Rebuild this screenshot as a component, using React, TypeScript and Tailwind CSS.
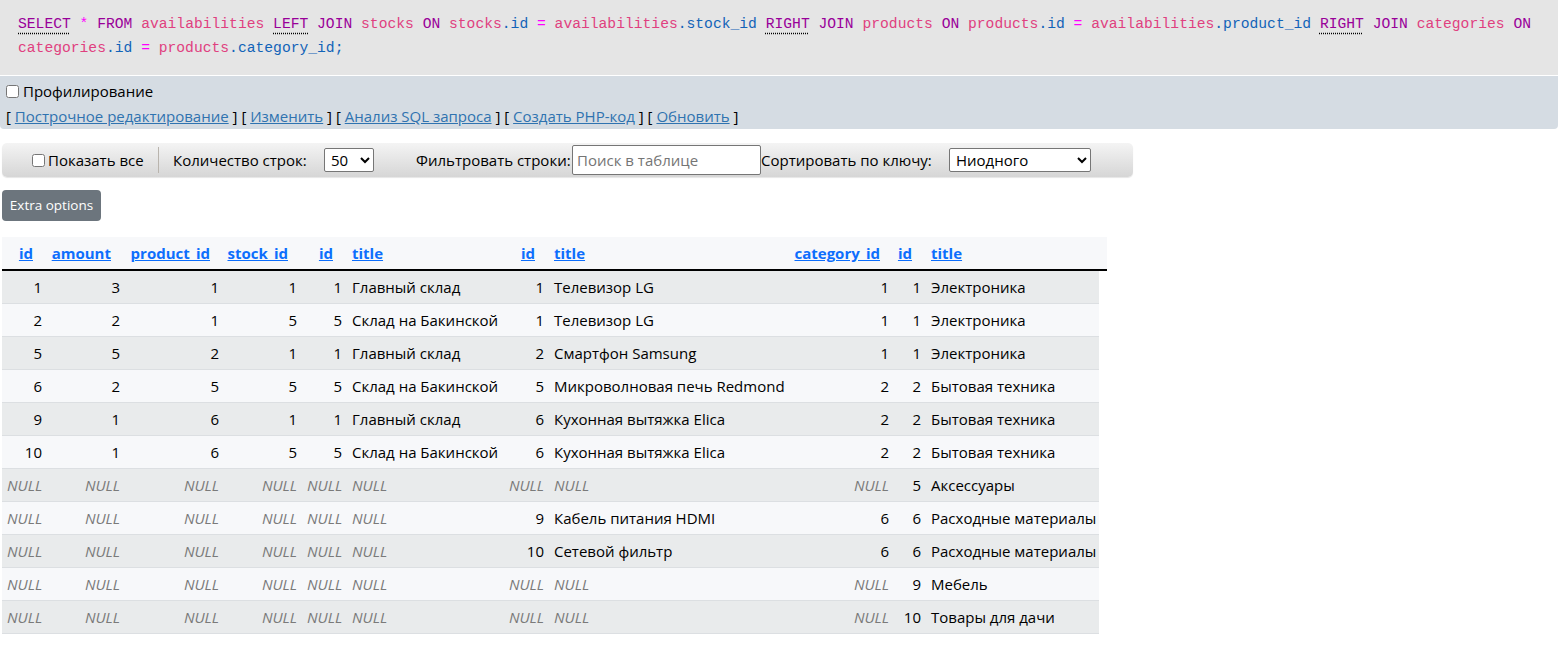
import React from 'react';

const KW = 'text-[#990099]';
const TB = 'text-[#e0407f]';
const CL = 'text-[#1263b8]';
const OP = 'text-[#ff00ff]';

const Abbr = ({ children }: { children: React.ReactNode }) => (
  <span className="underline decoration-dotted decoration-black underline-offset-[5px]">{children}</span>
);

const SqlBox = () => (
  <div className="bg-[#e5e5e5] h-[75px] pl-[18px] pt-[12px] font-['Liberation_Mono',monospace] text-[14.67px] leading-[24px] whitespace-nowrap">
    <div>
      <span className={KW}><Abbr>SELECT</Abbr></span> <span className={OP}>*</span>{' '}
      <span className={KW}>FROM</span> <span className={TB}>availabilities</span>{' '}
      <span className={KW}><Abbr>LEFT</Abbr></span> <span className={KW}>JOIN</span>{' '}
      <span className={TB}>stocks</span> <span className={KW}>ON</span>{' '}
      <span className={TB}>stocks</span><span className={CL}>.id</span> <span className={OP}>=</span>{' '}
      <span className={TB}>availabilities</span><span className={CL}>.stock_id</span>{' '}
      <span className={KW}><Abbr>RIGHT</Abbr></span> <span className={KW}>JOIN</span>{' '}
      <span className={TB}>products</span> <span className={KW}>ON</span>{' '}
      <span className={TB}>products</span><span className={CL}>.id</span> <span className={OP}>=</span>{' '}
      <span className={TB}>availabilities</span><span className={CL}>.product_id</span>{' '}
      <span className={KW}><Abbr>RIGHT</Abbr></span> <span className={KW}>JOIN</span>{' '}
      <span className={TB}>categories</span> <span className={KW}>ON</span>
    </div>
    <div>
      <span className={TB}>categories</span><span className={CL}>.id</span> <span className={OP}>=</span>{' '}
      <span className={TB}>products</span><span className={CL}>.category_id;</span>
    </div>
  </div>
);

const links = ['Построчное редактирование', 'Изменить', 'Анализ SQL запроса', 'Создать PHP-код', 'Обновить'];

const Profiling = () => (
  <div className="mt-px bg-[#d5dce3] h-[53px] rounded-b-[4px] pl-[6px] pt-[3px] text-[15px] text-black">
    <label className="flex items-center h-[24px]">
      <input type="checkbox" className="w-[13px] h-[13px] m-0" />
      <span className="ml-[4px]">Профилирование</span>
    </label>
    <div className="mt-px h-[24px] leading-[24px] whitespace-nowrap">
      {links.map((l, i) => (
        <React.Fragment key={l}>
          {i > 0 ? ' ' : ''}[ <a href="#" className="text-[#2f73b0] underline">{l}</a> ]
        </React.Fragment>
      ))}
    </div>
  </div>
);

const Toolbar = () => (
  <div className="ml-[2px] mt-[14px] w-[1131px] h-[34px] rounded-[5px] bg-gradient-to-b from-[#f4f4f4] to-[#d6d6d6] shadow-[0_1px_1px_rgba(0,0,0,0.1)] flex items-center text-[15px] text-black whitespace-nowrap">
    <input type="checkbox" className="ml-[30px] w-[13px] h-[13px] m-0" />
    <span className="ml-[3px] w-[95px]">Показать все</span>
    <span className="ml-[15px] w-px h-[26px] bg-[#b9b4ad]" />
    <span className="ml-[14px] w-[134px]">Количество строк:</span>
    <select className="ml-[17px] w-[50px] h-[24px] border border-[#767676] rounded-[2px] bg-white text-[15px] pl-[2px]">
      <option>50</option>
    </select>
    <span className="ml-[42px] w-[152px]">Фильтровать строки:</span>
    <input
      className="ml-[4px] w-[189px] h-[30px] border border-[#767676] rounded-[2px] bg-white px-[4px] text-[15px] placeholder:text-[#757575]"
      placeholder="Поиск в таблице"
    />
    <span className="w-[171px]">Сортировать по ключу:</span>
    <select className="ml-[17px] w-[142px] h-[24px] border border-[#767676] rounded-[2px] bg-white text-[15px] pl-[2px]">
      <option>Ниодного</option>
    </select>
  </div>
);

type Cell = string | null;
const rows: Cell[][] = [
  ['1', '3', '1', '1', '1', 'Главный склад', '1', 'Телевизор LG', '1', '1', 'Электроника'],
  ['2', '2', '1', '5', '5', 'Склад на Бакинской', '1', 'Телевизор LG', '1', '1', 'Электроника'],
  ['5', '5', '2', '1', '1', 'Главный склад', '2', 'Смартфон Samsung', '1', '1', 'Электроника'],
  ['6', '2', '5', '5', '5', 'Склад на Бакинской', '5', 'Микроволновая печь Redmond', '2', '2', 'Бытовая техника'],
  ['9', '1', '6', '1', '1', 'Главный склад', '6', 'Кухонная вытяжка Elica', '2', '2', 'Бытовая техника'],
  ['10', '1', '6', '5', '5', 'Склад на Бакинской', '6', 'Кухонная вытяжка Elica', '2', '2', 'Бытовая техника'],
  [null, null, null, null, null, null, null, null, null, '5', 'Аксессуары'],
  [null, null, null, null, null, null, '9', 'Кабель питания HDMI', '6', '6', 'Расходные материалы'],
  [null, null, null, null, null, null, '10', 'Сетевой фильтр', '6', '6', 'Расходные материалы'],
  [null, null, null, null, null, null, null, null, null, '9', 'Мебель'],
  [null, null, null, null, null, null, null, null, null, '10', 'Товары для дачи'],
];

const cols = [
  { name: 'id', w: 'w-[45px]', num: true },
  { name: 'amount', w: 'w-[78px]', num: true },
  { name: 'product_id', w: 'w-[99px]', num: true },
  { name: 'stock_id', w: 'w-[78px]', num: true },
  { name: 'id', w: 'w-[45px]', num: true },
  { name: 'title', w: 'w-[156px]', num: false },
  { name: 'id', w: 'w-[46px]', num: true },
  { name: 'title', w: 'w-[240px]', num: false },
  { name: 'category_id', w: 'w-[105px]', num: true },
  { name: 'id', w: 'w-[32px]', num: true },
  { name: 'title', w: 'w-[173px]', num: false },
];

const ResultTable = () => (
  <table className="ml-[2px] mt-[16px] w-[1105px] table-fixed border-separate border-spacing-0 text-[15px] text-black whitespace-nowrap">
    <thead>
      <tr className="bg-[#f7f8fa]">
        {cols.map((c, i) => (
          <th
            key={i}
            className={`${c.w} h-[34px] p-0 border-b-2 border-black font-bold ${
              c.num ? 'text-right pr-[14px]' : 'text-left pl-[5px]'
            }`}
          >
            <a href="#" className="text-[#0d6efd] underline">{c.name}</a>
          </th>
        ))}
        <th className="w-[8px] p-0 border-b-2 border-black" />
      </tr>
    </thead>
    <tbody>
      {rows.map((r, ri) => (
        <tr key={ri} className={ri % 2 === 0 ? 'bg-[#e9ebec]' : 'bg-[#f7f8fa]'}>
          {r.map((v, ci) => (
            <td
              key={ci}
              className={`h-[33px] py-0 px-[5px] border-b border-[#dcdfe2] overflow-visible ${
                cols[ci].num ? 'text-right' : 'text-left'
              } ${v === null ? 'italic text-[#7a7a7a]' : ''}`}
            >
              {v === null ? 'NULL' : v}
            </td>
          ))}
        </tr>
      ))}
    </tbody>
  </table>
);

export default function App() {
  return (
    <div className="w-[1558px] min-h-[645px] bg-white font-['Open_Sans',sans-serif]">
      <SqlBox />
      <Profiling />
      <Toolbar />
      <button className="ml-[2px] mt-[13px] w-[99px] h-[31px] rounded-[4px] bg-[#6c757d] text-white text-[13.5px] flex items-center justify-center">
        Extra options
      </button>
      <ResultTable />
    </div>
  );
}
